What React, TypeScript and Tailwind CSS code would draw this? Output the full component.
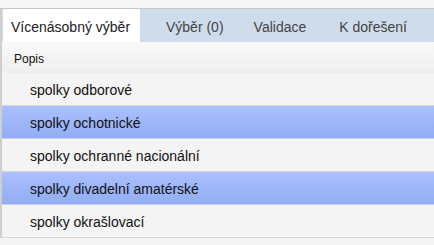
const tabs = ["Výběr (0)", "Validace", "K dořešení"];

const rows = [
  { label: "spolky odborové", selected: false },
  { label: "spolky ochotnické", selected: true },
  { label: "spolky ochranné nacionální", selected: false },
  { label: "spolky divadelní amatérské", selected: true },
  { label: "spolky okrašlovací", selected: false },
];

export default function App() {
  return (
    <div
      className="h-[245px] w-[434px] overflow-hidden bg-[#f4f4f4] text-[14px] text-[#222]"
      style={{ fontFamily: '"Liberation Sans", Arial, sans-serif' }}
    >
      <div className="h-[9px] border-b border-[#c6c6c6] bg-[#f6f6f6]" />
      <div className="border-l-2 border-[#cfcfcf]">
        {/* tab strip */}
        <div className="flex h-[33px] items-stretch bg-[#cedcec]">
          <div className="ml-px flex w-[137px] items-center bg-white pl-[8px] pt-[4px] text-[#222]">
            Vícenásobný výběr
          </div>
          <div className="flex items-center pt-[4px] text-[#444]">
            <span className="ml-[26px]">{tabs[0]}</span>
            <span className="ml-[30px]">{tabs[1]}</span>
            <span className="ml-[33px]">{tabs[2]}</span>
          </div>
        </div>
        {/* header */}
        <div className="flex h-[31px] items-center bg-gradient-to-b from-[#f9f9f9] to-[#eeeeee] pl-[12px] pt-[2px] text-[12px] text-[#111]">
          Popis
        </div>
        {rows.map((r) => (
          <div
            key={r.label}
            className={
              r.selected
                ? "flex h-[33px] items-center border-b border-[#c9d3e8] bg-gradient-to-b from-[#aac0ff] to-[#93acf3] pl-[28px] pt-[3px] text-[#111]"
                : "flex h-[33px] items-center border-b border-[#d6d6d6] bg-[#f4f4f4] pl-[28px] pt-[3px] text-[#111]"
            }
          >
            {r.label}
          </div>
        ))}
      </div>
    </div>
  );
}
